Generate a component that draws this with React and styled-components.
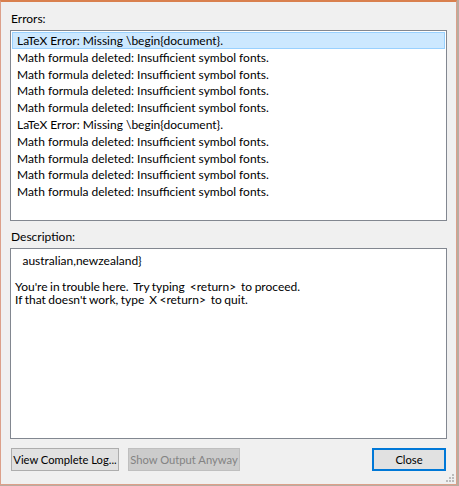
import styled, { createGlobalStyle } from "styled-components";

const GlobalStyle = createGlobalStyle`
  body {
    margin: 0;
    background: #b9aca0;
    font-family: Lato, "Noto Sans", "Liberation Sans", sans-serif;
  }
`;

const Window = styled.div`
  box-sizing: border-box;
  width: 457px;
  height: 485px;
  background: #f0f0f0;
  border: 1px solid #dca08a;
  border-top: 2px solid #d9804e;
  padding: 8px 10px 0 9px;
  display: flex;
  flex-direction: column;
  position: relative;
  font-size: 12px;
  color: #000;
`;

const Label = styled.div`
  height: 20px;
  line-height: 18px;
  padding-left: 1px;
`;

const Box = styled.div`
  box-sizing: border-box;
  background: #fff;
  border: 1px solid #828790;
  width: 437px;
  height: ${(p) => p.$h}px;
  margin-bottom: ${(p) => p.$mb}px;
  padding: ${(p) => p.$pad};
`;

const Row = styled.div`
  box-sizing: border-box;
  height: 16.8px;
  line-height: 15px;
  padding-left: 4px;
  border: 1px solid ${(p) => (p.$selected ? "#99d1ff" : "transparent")};
  background: ${(p) => (p.$selected ? "#cce8ff" : "transparent")};
  white-space: nowrap;
`;

const Line = styled.div`
  height: 13px;
  line-height: 13px;
  white-space: pre;
  word-spacing: -0.6px;
`;

const Footer = styled.div`
  display: flex;
  align-items: center;
  gap: 9px;
  padding-left: 1px;
`;

const Button = styled.button`
  box-sizing: border-box;
  height: 23px;
  padding: 0;
  white-space: nowrap;
  font-family: inherit;
  font-size: 11.2px;
  background: ${(p) => (p.disabled ? "#cccccc" : "#e1e1e1")};
  color: ${(p) => (p.disabled ? "#838383" : "#000")};
  border: ${(p) => (p.$primary ? "2px solid #0078d7" : p.disabled ? "1px solid #bfbfbf" : "1px solid #adadad")};
  width: ${(p) => p.$w}px;
  margin-left: ${(p) => (p.$push ? "auto" : "0")};
`;

const Grip = styled.svg`
  position: absolute;
  right: 2px;
  bottom: 2px;
`;

const errors = [
  "LaTeX Error: Missing \\begin{document}.",
  "Math formula deleted: Insufficient symbol fonts.",
  "Math formula deleted: Insufficient symbol fonts.",
  "Math formula deleted: Insufficient symbol fonts.",
  "Math formula deleted: Insufficient symbol fonts.",
  "LaTeX Error: Missing \\begin{document}.",
  "Math formula deleted: Insufficient symbol fonts.",
  "Math formula deleted: Insufficient symbol fonts.",
  "Math formula deleted: Insufficient symbol fonts.",
  "Math formula deleted: Insufficient symbol fonts.",
];

const description = [
  "   australian,newzealand}",
  "",
  "You're in trouble here.  Try typing  <return>  to proceed.",
  "If that doesn't work, type  X <return>  to quit.",
];

export default function App() {
  return (
    <>
      <GlobalStyle />
      <Window>
        <Label>Errors:</Label>
        <Box $h={191} $mb={7} $pad="1px 1px">
          {errors.map((e, i) => (
            <Row key={i} $selected={i === 0}>
              {e}
            </Row>
          ))}
        </Box>
        <Label>Description:</Label>
        <Box $h={191} $mb={9} $pad="5px 4px">
          {description.map((l, i) => (
            <Line key={i}>{l}</Line>
          ))}
        </Box>
        <Footer>
          <Button $w={108}>View Complete Log...</Button>
          <Button $w={112} disabled>
            Show Output Anyway
          </Button>
          <Button $w={74} $primary $push>
            Close
          </Button>
        </Footer>
        <Grip width="8" height="8" viewBox="0 0 8 8">
          {[
            [6, 0],
            [6, 3],
            [3, 3],
            [6, 6],
            [3, 6],
            [0, 6],
          ].map(([x, y], i) => (
            <rect key={i} x={x} y={y} width="2" height="2" fill="#bcbcbc" />
          ))}
        </Grip>
      </Window>
    </>
  );
}
